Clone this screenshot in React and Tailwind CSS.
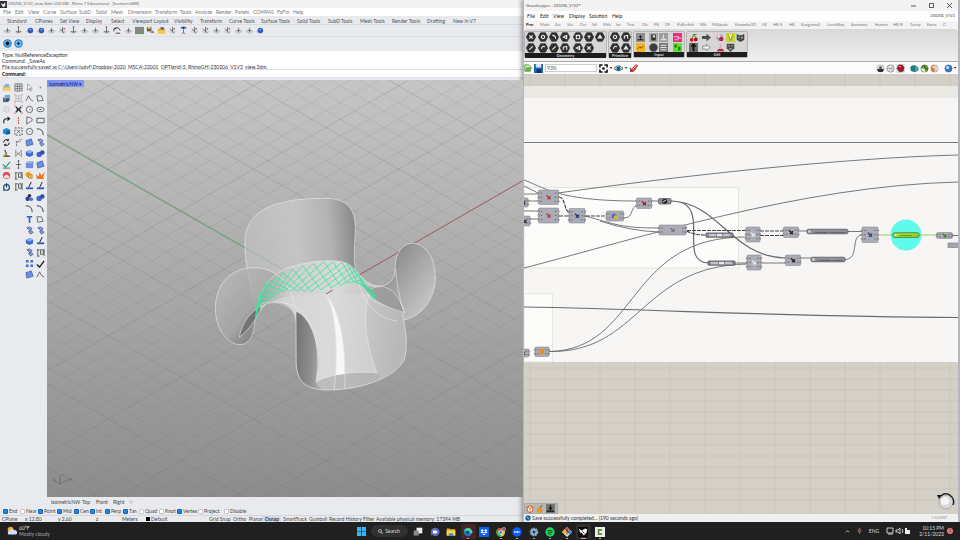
import React from "react";

const menuItems = [
  ["File", "w-[12px]"], ["Edit", "w-[13px]"], ["View", "w-[15px]"], ["Curve", "w-[17px]"],
  ["Surface", "w-[19px]"], ["SubD", "w-[17px]"], ["Solid", "w-[15px]"], ["Mesh", "w-[17px]"],
  ["Dimension", "w-[27px]"], ["Transform", "w-[25px]"], ["Tools", "w-[15px]"], ["Analyze", "w-[21px]"],
  ["Render", "w-[19px]"], ["Panels", "w-[18px]"], ["COMPAS", "w-[24px]"], ["FoFin", "w-[16px]"], ["Help", "w-[14px]"],
];

const toolTabs = [
  ["Standard", "w-[28px]"], ["CPlanes", "w-[25px]"], ["Set View", "w-[26px]"], ["Display", "w-[25px]"],
  ["Select", "w-[21px]"], ["Viewport Layout", "w-[42px]"], ["Visibility", "w-[26px]"], ["Transform", "w-[29px]"],
  ["Curve Tools", "w-[32px]"], ["Surface Tools", "w-[36px]"], ["Solid Tools", "w-[31px]"], ["SubD Tools", "w-[32px]"],
  ["Mesh Tools", "w-[32px]"], ["Render Tools", "w-[35px]"], ["Drafting", "w-[26px]"], ["New in V7", "w-[24px]"],
];

const snaps = [
  ["End", true, "w-[17px]"], ["Near", false, "w-[18px]"], ["Point", true, "w-[19px]"], ["Mid", true, "w-[17px]"],
  ["Cen", true, "w-[16px]"], ["Int", true, "w-[15px]"], ["Perp", true, "w-[18px]"], ["Tan", true, "w-[16px]"],
  ["Quad", false, "w-[20px]"], ["Knot", false, "w-[18px]"], ["Vertex", true, "w-[21px]"],
  ["Project", false, "w-[26px]"], ["Disable", false, "w-[24px]"],
];

const ghTabs = [
  ["Prm", "w-[14px]"], ["Math", "w-[15px]"], ["Set", "w-[12px]"], ["Vec", "w-[13px]"], ["Crv", "w-[12px]"],
  ["Srf", "w-[11px]"], ["Msh", "w-[13px]"], ["Int", "w-[11px]"], ["Trns", "w-[15px]"], ["Dis", "w-[12px]"],
  ["PK", "w-[11px]"], ["DF", "w-[12px]"], ["Pufferfish", "w-[23px]"], ["Wb", "w-[12px]"], ["Millipede", "w-[23px]"],
  ["Karamba3D", "w-[27px]"], ["LB", "w-[11px]"], ["HB-E", "w-[16px]"], ["HB", "w-[12px]"], ["Kangaroo2", "w-[26px]"],
  ["LunchBox", "w-[24px]"], ["Anemone", "w-[24px]"], ["Human", "w-[18px]"], ["HB-R", "w-[17px]"],
  ["Tunny", "w-[17px]"], ["Extra", "w-[16px]"], ["C", "w-[6px]"],
];

const K = "#3d4248";
const glyphs = {
  open: <><path d="M1 3h3l1 1h4v5H1z" fill="#e9b33b" /><path d="M3 1h5v4H3z" fill="#7fb2e6" /><path d="M1 9l1-4h8L9 9z" fill="#f5cf66" /></>,
  copy: <><path d="M1 4h6v5H1z" fill="#5b6c7c" /><path d="M3 1h6v6H3z" fill="#6fb0d8" /><path d="M4 5h4v3H4z" fill="#445" /></>,
  gear: <><circle cx="5" cy="5" r="3" fill="none" stroke="#d0d2d6" strokeWidth="1.4" /><circle cx="5" cy="5" r="1" fill="#d0d2d6" /></>,
  redo: <path d="M2 8V6q0-3 3-3h3M6 1l2.500 2L6 5" fill="none" stroke="#222" strokeWidth="1.2" />,
  solid: <><path d="M1 3l4-2 4 2v4L5 9 1 7z" fill="#1d8fd0" /><path d="M5 4h4v4H5z" fill="#0b5f9d" /></>,
  cycle: <path d="M2 5a3 3 0 0 1 5-2.500M8 5a3 3 0 0 1-5 2.500M7 1v2H5M3 9V7h2" fill="none" stroke="#222" strokeWidth="1.1" />,
  brush: <><path d="M3 1l2 5" stroke="#444" strokeWidth="1.3" /><path d="M2 6h4l3 3H1z" fill="#b39a3a" /><path d="M3 8h6" stroke="#333" /></>,
  check: <><path d="M1 5l3 3 5-6" fill="none" stroke="#2a9a7a" strokeWidth="1.3" /><path d="M1 9h8" stroke="#557" /></>,
  stop: <><circle cx="5" cy="5" r="4" fill="#e14545" /><path d="M2 6q3-4 6 0v2H2z" fill="#f7dada" /></>,
  power: <><circle cx="5" cy="6" r="3.200" fill="none" stroke="#1b4262" strokeWidth="1.3" /><path d="M5 1v5M1 9h2" stroke="#1b4262" strokeWidth="1.2" /></>,
  grid: <path d="M1 1h8v8H1zM1 3.700h8M1 6.300h8M3.700 1v8M6.300 1v8" fill="none" stroke="#6b6f76" strokeWidth="0.900" />,
  gridred: <><path d="M2 2h6v6H2zM2 5h6M5 2v6" fill="none" stroke="#b9bcc2" /><path d="M0 1h2M8 1h2M0 9h2M8 9h2" stroke="#e08080" /></>,
  cross: <><path d="M2 2l6 6M8 2L2 8M3 5h4" stroke="#333" strokeWidth="1.500" /><path d="M0 1h2M8 1h2M0 9h2M8 9h2" stroke="#e06060" /></>,
  dots: <path d="M5 1v8" stroke="#d55" strokeWidth="1.300" strokeDasharray="2 1" />,
  target: <><path d="M1 1h8v8H1z" fill="none" stroke="#444" strokeDasharray="2 1.500" /><path d="M3 3l4 4M7 3L3 7" stroke="#468" /></>,
  pts: <path d="M3 9V4h4M6 2l2 2M2 4h1M8 1v1" fill="none" stroke="#555" strokeDasharray="2 1" />,
  bars: <path d="M2 1v8M8 1v8M3 4l4 3M7 3L3 7" stroke="#666" fill="none" strokeWidth="0.800" />,
  plus: <path d="M5 0v10M2 5h6M4 1h2M4 9h2" stroke="#555" fill="none" strokeWidth="0.900" />,
  dims: <path d="M2 2v7M1 2h3M1 9h3M5 2h3v5H5zM9 1v8" stroke="#444" fill="none" strokeWidth="0.900" />,
  arrow: <path d="M3 1v7l2-2 1 3 1-.5-1-2.500h2z" fill="#fff" stroke="#777" strokeWidth="0.700" />,
  dot: <circle cx="5" cy="5" r="1" fill="#888" />,
  poly: <path d="M1 8l3-6 2 4 3 2" fill="none" stroke={K} strokeWidth="0.800" />,
  rectc: <path d="M1 2l5 0 2 5-6 1z" fill="none" stroke={K} strokeWidth="0.800" />,
  circ: <><circle cx="5" cy="5" r="3.500" fill="none" stroke={K} strokeWidth="0.800" /><path d="M5 5h1" stroke={K} /></>,
  ell: <><ellipse cx="5" cy="5" rx="4" ry="2.500" fill="none" stroke={K} strokeWidth="0.800" /><path d="M4 5h2" stroke={K} /></>,
  arc: <path d="M2 1q7 1 6 4L2 9z" fill="none" stroke={K} strokeWidth="0.800" />,
  rect: <path d="M1 2.500h8v5H1z" fill="none" stroke={K} strokeWidth="0.900" />,
  quarter: <path d="M1 2q7 0 7 7" fill="none" stroke={K} strokeWidth="1.100" />,
  srf: <path d="M1 3l6-2 2 6-7 2z" fill="#6b8fe0" stroke="#2d4ea0" strokeWidth="0.700" />,
  srf2: <path d="M2 2l3-1 3 2-3 2zM4 6l3-1 2 2-3 2z" fill="#8aa3d8" stroke="#2d3e80" strokeWidth="0.700" />,
  box: <><path d="M1 3l4-2 4 2v4L5 9 1 7z" fill="#4369cf" /><path d="M1 3l4 2 4-2-4-2z" fill="#92b0f2" /></>,
  balls: <><circle cx="3.500" cy="6" r="3" fill="#3e66cc" /><circle cx="7" cy="4" r="2.500" fill="#2f4fa5" /></>,
  cyl: <><path d="M1 4h8v5H1z" fill="#6d90e3" /><path d="M1 4l2-2h6v2z" fill="#b7cbf7" stroke="#2d4ea0" strokeWidth="0.500" /></>,
  puzzle: <><circle cx="3.500" cy="4" r="3" fill="#f2a128" /><path d="M4 4h4v4H4z" fill="#fbb944" stroke="#a25f11" strokeWidth="0.600" /></>,
  spark: <path d="M1 9L0 4l3 2 1-5 2 4 4-4-2 6 1 2z" fill="#f0761d" />,
  trim: <><path d="M7 0L4 6" stroke="#222" strokeWidth="1.100" /><path d="M1 7h8" stroke="#2d57c0" strokeWidth="2" /></>,
  three: <><circle cx="3" cy="6.500" r="2.500" fill="#2a4490" /><circle cx="7" cy="7" r="2" fill="#486fdd" /><circle cx="5" cy="3" r="2" fill="#30333a" /></>,
  text: <path d="M2 2h6M5 2v7" stroke="#3561c8" strokeWidth="1.800" />,
  blocks: <path d="M1 1h3v3H1zM6 1h3v3H6zM1 6h3v3H1zM6 6h3v3H6z" fill="#4a70d0" />,
  pale: <><path d="M0 6l5-3 5 3-5 3z" fill="#c7cad0" /><path d="M3 5h4M5 2v5" stroke="#686c74" strokeWidth="0.900" /></>,
  paleRed: <><path d="M0 6l5-3 5 3-5 3z" fill="#cfd2d8" /><path d="M2 3l5 5M5 1v5" stroke="#5d6168" strokeWidth="0.900" /><circle cx="7" cy="3" r="1" fill="#c66" /></>,
  ball: <><path d="M0 6l5-3 5 3-5 3z" fill="#cfd2d8" /><circle cx="6" cy="5" r="3" fill="#2e55b8" /><circle cx="6" cy="4" r="1" fill="#a3bdf5" /></>,
  axis: <><path d="M0 7l5-2 5 2-5 2z" fill="#cfd2d8" /><path d="M5 1v6M5 7l-3-1M5 7l3-1M4 1h2" stroke="#555" strokeWidth="0.900" fill="none" /></>,
  undo: <path d="M1 3l3 0M1 3v3M1 3q5-3 7 2M3 8h5" stroke="#333" strokeWidth="1" fill="none" />,
  cplane: <><path d="M0 1h10v8H0z" fill="#858985" /><path d="M0 8h9M1 9V1" stroke="#5a9a5a" strokeWidth="0.800" /></>,
  save: <><path d="M1 1h5v5H1z" fill="#6b5d38" /><path d="M2 1h3v2H2z" fill="#e6d9a0" /><path d="M4 7l4-2 1 3z" fill="#777" /></>,
  folder: <><path d="M1 3h3l1 1h4v5H1z" fill="#e7a92d" /><path d="M4 1l4 1v2H4z" fill="#555" /><path d="M1 9l1-4h8L9 9z" fill="#f7cd58" /></>,
  person: <><path d="M1 2q4-3 8 0-4 3-8 0" fill="#5a7abb" /><circle cx="5" cy="2" r="1" fill="#222" /><path d="M5 4v4M3 9l2-2 2 2" stroke="#666" fill="none" /></>,
  tick: <path d="M1 6l3 3 5-7" stroke="#222" strokeWidth="1.500" fill="none" />,
};

function Glyph({ name, className = "size-[9px]" }) {
  return <svg viewBox="0 0 10 10" className={`shrink-0 ${className}`} aria-hidden="true">{glyphs[name]}</svg>;
}

function ToolButton({ name, className = "h-[11px] w-[12px]" }) {
  return (
    <button type="button" aria-label={name} className={`flex shrink-0 items-center justify-center ${className}`}>
      <Glyph name={name} />
    </button>
  );
}

const planeTools = ["pale", "axis", "ball", "ball", "pale", "paleRed", "axis", "pale", "pale", "axis", "undo", "pale", "cplane", "save", "folder", "paleRed", "person", "paleRed", "paleRed", "pale", "paleRed", "pale", "pale"];
const column1 = ["open", "copy", "gear", "redo", "solid", "cycle", "brush", "check", "stop", "power"];
const column2 = ["grid", "gridred", "cross", "dots", "target", "pts", "bars", "plus", "dims", "dims"];
const column3 = ["arrow", "poly", "circ", "arc", "circ", "srf", "box", "cyl", "puzzle", "trim", "three", "quarter", "text", "srf2", "box", "srf2", "blocks", "srf"];
const column4 = ["dot", "rectc", "ell", "rect", "quarter", "srf2", "balls", "srf", "spark", "trim", "balls", "quarter", "rectc", "srf2", "trim", "dims", "tick", "poly"];

function sample(points, t) {
  const f = Math.min(t, 0.9999) * (points.length - 1);
  const i = Math.floor(f);
  const r = f - i;
  return [points[i][0] + (points[i + 1][0] - points[i][0]) * r, points[i][1] + (points[i + 1][1] - points[i][1]) * r];
}
const bandTop = [[170, 385], [176, 345], [200, 305], [238, 282], [305, 257], [375, 244], [435, 248], [462, 265], [482, 294], [530, 350]];
const bandLow = [[167, 418], [170, 385], [205, 360], [245, 335], [290, 333], [335, 335], [405, 322], [455, 304], [478, 303], [523, 358]];

function GridShell() {
  const n = 20;
  const span = 3;
  const lines = [];
  const mix = (p, q, k) => [p[0] + (q[0] - p[0]) * k, p[1] + (q[1] - p[1]) * k];
  for (let i = 1 - span; i < n; i++) {
    const a = Math.max(0, i) / n;
    const b = Math.min(n, i + span) / n;
    const cut = i < 0 ? -i / span : 0;
    const cut2 = i + span > n ? (i + span - n) / span : 0;
    const T = sample(bandTop, a), B = sample(bandLow, b), T2 = sample(bandTop, b), B2 = sample(bandLow, a);
    lines.push([mix(T, B2, cut), mix(B, T2, cut2)]);
    lines.push([mix(B2, T, cut), mix(T2, B, cut2)]);
  }
  return <path d={lines.map(([p, q]) => `M${p[0]} ${p[1]}L${q[0]} ${q[1]}`).join("")} stroke="#33e59a" strokeOpacity="0.900" strokeWidth="2.600" fill="none" />;
}

function Viewport() {
  const minor = [];
  const major = [];
  for (let i = -40; i < 60; i++) {
    const target = i % 5 === 0 ? major : minor;
    const x = 326 + i * 29;
    target.push(`M${x - 700} ${294 - 402}L${x + 700} ${294 + 402}`);
    target.push(`M${x - 700} ${294 + 402}L${x + 700} ${294 - 402}`);
  }
  return (
    <svg viewBox="47 80 476 418" preserveAspectRatio="xMinYMin slice" className="absolute inset-0 size-full" role="img" aria-label="IsometricNW model view">
      <defs>
        <linearGradient id="sky" x1="0" y1="0" x2="0" y2="1"><stop offset="0" stopColor="#c5c5c5" /><stop offset="1" stopColor="#8c8c8c" /></linearGradient>
        <linearGradient id="back" x1="0" y1="0.300" x2="1" y2="0.200"><stop offset="0" stopColor="#bebebe" /><stop offset="0.450" stopColor="#c9c9c9" /><stop offset="0.750" stopColor="#b4b4b4" /><stop offset="1" stopColor="#7b7b7b" /></linearGradient>
        <linearGradient id="leftLobe" x1="0" y1="0.300" x2="0.700" y2="0.800"><stop offset="0" stopColor="#b8b8b8" /><stop offset="0.550" stopColor="#a6a6a6" /><stop offset="1" stopColor="#626262" /></linearGradient>
        <linearGradient id="rightLobe" x1="0" y1="0.300" x2="0.800" y2="0.900"><stop offset="0" stopColor="#6e6e6e" /><stop offset="0.450" stopColor="#989898" /><stop offset="1" stopColor="#c8c8c8" /></linearGradient>
        <linearGradient id="front" x1="0" y1="0" x2="1" y2="0.100"><stop offset="0" stopColor="#9a9a9a" /><stop offset="0.250" stopColor="#cfcfcf" /><stop offset="0.550" stopColor="#d9d9d9" /><stop offset="0.800" stopColor="#c4c4c4" /><stop offset="1" stopColor="#b8b8b8" /></linearGradient>
        <linearGradient id="leg" x1="0" y1="0" x2="1" y2="0.150"><stop offset="0" stopColor="#727272" /><stop offset="0.600" stopColor="#909090" /><stop offset="1" stopColor="#b8b8b8" /></linearGradient>
      </defs>
      <path d="M47 80H523V498H47z" fill="url(#sky)" />
      <path d={minor.join("")} stroke="#777" strokeOpacity="0.200" strokeWidth="0.800" />
      <path d={major.join("")} stroke="#707070" strokeOpacity="0.280" strokeWidth="0.900" />
      <path d="M47 135L326 294" stroke="#4f9a55" strokeWidth="0.800" />
      <path d="M326 294L523 180.500" stroke="#a04c4c" strokeWidth="0.800" />
      <g transform="translate(200 180) scale(0.33333)" stroke="#ececec" strokeOpacity="0.750" strokeWidth="2.300" strokeLinejoin="round">
        <path d="M170 400C158 340 132 260 135 180C140 90 225 55 370 55C448 54 467 90 466 155C464 200 458 240 470 282L400 320L240 330z" fill="url(#back)" fillOpacity="0.820" />
        <path d="M0 127L378 342" stroke="#7fae82" strokeOpacity="0.500" strokeWidth="2" />
        <path d="M288 400C270 310 230 262 160 263C85 265 45 320 46 388C48 450 85 494 120 494C160 492 166 440 165 400C190 360 240 355 288 400z" fill="url(#leftLobe)" fillOpacity="0.750" />
        <path d="M118 472C125 430 150 395 185 378C170 420 145 450 118 472z" fill="#747474" />
        <path d="M478 285C495 320 570 340 585 280C583 220 605 190 640 190C685 195 708 245 706 300C700 375 650 422 590 422C525 418 480 350 478 285z" fill="url(#rightLobe)" fillOpacity="0.850" />
        <path d="M168 400C172 340 200 290 260 265C330 240 400 238 435 248C475 262 480 310 535 320C580 320 600 360 608 400C620 460 625 510 612 540C585 595 480 630 380 630C310 628 292 600 290 550V440C285 390 265 366 215 366C190 366 175 380 168 400z" fill="url(#front)" stroke="none" />
        <path d="M168 415C172 340 200 290 260 265C330 240 400 238 435 248C475 262 480 310 535 320" fill="none" />
        <path d="M215 366C275 368 345 430 355 540Q356 575 348 605C400 578 470 574 530 578C500 490 485 420 508 340C380 350 280 330 215 366z" fill="#dcdcdc" fillOpacity="0.500" stroke="none" />
        <path d="M288 395C330 410 358 490 355 560L348 605C350 615 360 625 380 630C310 628 292 600 290 550z" fill="url(#leg)" stroke="none" />
        <path d="M348 605C400 578 470 574 530 578C570 600 480 630 380 630C362 626 350 615 348 605z" fill="#b0b0b0" fillOpacity="0.700" stroke="none" />
        <path d="M348 605C400 578 470 574 530 578C500 490 485 420 508 340Q520 318 545 318M348 605C356 560 358 490 330 430C305 380 270 366 215 366Q185 366 168 385M288 390V545C290 600 310 628 380 630C480 630 585 595 612 540C625 500 618 460 608 400M285 385C275 330 255 300 230 285" fill="none" />
        <path d="M480 300C500 340 530 310 560 323C590 335 598 360 613 398C560 385 500 350 480 300z" fill="#8f8f8f" fillOpacity="0.700" stroke="none" />
        <path d="M475 290C480 360 530 418 590 422M510 328C555 305 593 330 613 398C560 380 520 370 500 340M587 265Q590 330 613 398" fill="none" />
        <path d="M378 342C410 400 412 500 408 585L434 582C434 480 420 400 378 342z" fill="#f7f7f7" stroke="none" />
        <path d="M378 342C410 400 415 530 402 630M378 342C428 410 438 520 434 627" fill="none" />
        <GridShell />
        <path d="M378 342L398 330" stroke="#6a3d3d" strokeWidth="3" />
      </g>
      <path d="M60 484V475M60 484L53 480M60 484L70 479" stroke="#666" strokeWidth="0.700" fill="none" />
      <g fill="#5a5a5a" fontFamily="Lato, sans-serif" fontSize="4"><text x="62" y="476">z</text><text x="53" y="480">y</text><text x="70" y="480">x</text></g>
    </svg>
  );
}

function Rhino() {
  return (
    <section className="flex min-h-0 min-w-0 flex-col overflow-hidden bg-[#e9eaee]">
      <header className="flex h-[8px] shrink-0 items-center gap-px bg-[#f2f2f2] text-[#555]">
        <svg viewBox="0 0 10 10" className="size-[7px]"><path d="M0 0h10v10H0z" fill="#2b3136" /><path d="M1 3l3 2 3-3 1 4-3 3-2-2z" fill="#fff" /></svg>
        <h1 className="whitespace-pre font-['Open_Sans'] text-[4px]">230206_V1V2_view.3dm (220 KB) - Rhino 7 Educational - [IsometricNW]</h1>
      </header>
      <nav className="flex h-[8px] shrink-0 items-center bg-white pl-[3px] text-[#777]">
        {menuItems.map(([t, w]) => <button type="button" key={t} className={`shrink-0 text-left ${w}`}>{t}</button>)}
      </nav>
      <nav className="flex h-[9px] shrink-0 items-center border-b border-[#d9dbe0] pt-px pl-[7px] text-[#4c4f55]">
        {toolTabs.map(([t, w]) => <button type="button" key={t} className={`shrink-0 whitespace-nowrap text-left ${w}`}>{t}</button>)}
      </nav>
      <div className="flex h-[12px] shrink-0 items-center border-b border-[#dddfe4] pl-[2px]">
        {planeTools.map((n, i) => <ToolButton key={i} name={n} className="h-[11px] w-[11px]" />)}
        <Glyph name="ball" />
      </div>
      <div className="flex h-[14px] shrink-0 items-center gap-[2px] pb-px pl-[3px]">
        {["Compas", "Session"].map((t) => (
          <button type="button" key={t} aria-label={t}>
            <svg viewBox="0 0 10 10" className="size-[9px]"><circle cx="5" cy="5" r="4.700" fill="#2287d6" /><circle cx="5" cy="5" r="2.800" fill={t === "Session" ? "#2f8fdd" : "#0a1824"} stroke="#b8e4fa" strokeWidth="0.900" /><circle cx="5" cy="5" r="1.200" fill="#0a1824" /></svg>
          </button>
        ))}
      </div>
      <div className="h-[18px] shrink-0 bg-white pt-px pl-[2px] leading-[6px] text-[#333]">
        <p>Type: NullReferenceException</p>
        <p>Command: _SaveAs</p>
        <p className="whitespace-nowrap">File successfully saved as C:\Users\judyf\Dropbox\2020_MSCA\22001_OPTIgrid\5. RhinoGH\230206_V1V2_view.3dm.</p>
      </div>
      <div className="mb-[2px] flex h-[9px] shrink-0 items-center border-y border-[#dfe1ea] bg-white pl-[2px]">
        <label htmlFor="command" className="font-bold text-black">Command:</label>
        <input id="command" className="h-[6px] min-w-0 flex-1 outline-none" />
      </div>
      <div className="flex min-h-0 flex-1">
        <aside className="flex w-[47px] shrink-0 pt-[2px]">
          {[column1, column2].map((c, i) => (
            <div key={i} className="flex w-[12px] flex-col">{c.map((n, j) => <ToolButton key={j} name={n} />)}</div>
          ))}
          <div className="flex w-[11px] flex-col">{column3.map((n, j) => <ToolButton key={j} name={n} className="h-[11px] w-[11px]" />)}</div>
          <div className="flex w-[11px] flex-col">{column4.map((n, j) => <ToolButton key={j} name={n} className="h-[11px] w-[11px]" />)}</div>
        </aside>
        <div className="relative min-w-0 flex-1">
          <Viewport />
          <button type="button" className="absolute top-0 left-0 flex h-[7px] w-[37px] items-center justify-between bg-[#8094f2] px-[2px] text-[#15205c]">
            IsometricNW<span>▾</span>
          </button>
        </div>
      </div>
      <nav className="flex h-[9px] shrink-0 items-center pl-[51px] text-[#444]">
        <button type="button" className="w-[31px] text-left">IsometricNW</button>
        <button type="button" className="w-[14px] text-left">Top</button>
        <button type="button" className="w-[17px] text-left">Front</button>
        <button type="button" className="w-[16px] text-left">Right</button>
        <svg viewBox="0 0 6 6" className="size-[4px]"><circle cx="3" cy="3" r="2" fill="none" stroke="#bbb" /></svg>
      </nav>
      <form className="flex h-[9px] shrink-0 items-center pt-px pl-[3px] text-[#444]">
        {snaps.map(([t, on, w]) => (
          <label key={t} className={`flex shrink-0 items-center gap-px ${w}`}>
            <input type="checkbox" defaultChecked={on} className="size-[5px] shrink-0 appearance-none rounded-[1px] border border-[#c4c6ca] bg-white checked:border-[#0a63b8] checked:bg-[#2b86d8]" />
            {t}
          </label>
        ))}
      </form>
      <footer className="flex h-[7px] shrink-0 items-center border-t border-[#d6d8dd] text-[#444]">
        <span className="w-[25px] pl-[2px]">CPlane</span><span className="w-[33px]">x 12.80</span><span className="w-[38px]">y 2.60</span><span className="w-[26px]">z</span>
        <span className="w-[24px]">Meters</span><span className="size-[4px] bg-black" /><span className="w-[59px] pl-px">Default</span>
        <button type="button" className="w-[24px] whitespace-nowrap text-left">Grid Snap</button>
        <button type="button" className="w-[16px] text-left">Ortho</button>
        <button type="button" className="w-[14px] text-left">Planar</button>
        <button type="button" className="w-[18px] bg-[#ccd6ee] font-bold">Osnap</button>
        <button type="button" className="w-[28px] pl-[2px] text-left">SmartTrack</button>
        <button type="button" className="w-[20px] text-left">Gumball</button>
        <button type="button" className="w-[34px] whitespace-nowrap text-left">Record History</button>
        <button type="button" className="w-[13px] text-left">Filter</button>
        <span className="whitespace-nowrap">Available physical memory: 17394 MB</span>
      </footer>
    </section>
  );
}

const hexMarks = ["M4 4l4 4M8 4L4 8", "M4 8l4-4", "M6 4a2 2 0 1 0 .1 0", "M4 4q4 0 4 4", "M4 6l4-2v4z", "M4 7q2-5 4-2", "M4 4h4v4H4z", "M4 8V5l4-1v4", "M4 5h4M6 4v4", "M4 7l2-3 2 3z"];
function Hex({ i }) {
  return (
    <svg viewBox="0 0 12 12" className="size-[10px]"><path d="M3.200 0.800h5.600L11.600 6 8.800 11.200H3.200L0.400 6z" fill="#303030" stroke="#111" strokeWidth="0.600" /><path d={hexMarks[i % 10]} fill="none" stroke="#f2f2f2" strokeWidth="1.300" /></svg>
  );
}
const tiles = {
  grey: <><path d="M0 0h12v12H0z" fill="#8d8d8d" /><path d="M2 9h8M6 3v6M4 5h4" stroke="#222" strokeWidth="1.300" /></>,
  yellow: <><path d="M0 0h12v12H0z" fill="#f0b323" /><path d="M2 8l3-3 2 2 3-3" stroke="#7a4a00" fill="none" strokeWidth="1.300" /></>,
  dial: <><path d="M0 0h12v12H0z" fill="#a8a8a8" /><path d="M3 2h6v8H3z" fill="#303030" /><path d="M5 3h3v3H5z" fill="#ddd" /></>,
  knob: <circle cx="6" cy="6" r="5.500" fill="#3c3c3c" stroke="#777" />,
  graph: <><path d="M0 0h12v12H0z" fill="#9d9d9d" /><path d="M2 9h8M6 2v5l-3 2M6 7l3 2" stroke="#eee" fill="none" strokeWidth="1.200" /></>,
  list: <><path d="M0 0h12v12H0z" fill="#777" /><path d="M2 3h8M2 6h8M2 9h8" stroke="#e5e5e5" strokeWidth="1.300" /></>,
  pink: <><path d="M0 0h12v12H0z" fill="#e52f83" /><path d="M1 5h6v2h4M2 9h5" stroke="#ffc4de" strokeWidth="1.500" fill="none" /></>,
  green: <><path d="M0 0h12v12H0z" fill="#61e32c" /><path d="M2 2h3v4H2zM7 5h3v5H7z" fill="#177a12" /></>,
  cherry: <><path d="M4 8L6 2l4 5M6 2h4" stroke="#4b8a2a" strokeWidth="1.300" fill="none" /><circle cx="3.500" cy="9" r="2.500" fill="#cf1c1c" /><circle cx="9" cy="8.500" r="2.500" fill="#a81414" /></>,
  tree: <><path d="M0 0h12v12H0z" fill="#6c6c6c" /><path d="M6 11V5M3 4h6M4 2h4" stroke="#161616" strokeWidth="2.500" /></>,
  right: <path d="M0 4h6V1l6 5-6 5V8H0z" fill="#4c4c4c" />,
  hollow: <path d="M1 4h5V2l5 4-5 4V8H1z" fill="#f4f4f4" stroke="#777" />,
  bloom: <><circle cx="5" cy="6" r="4.500" fill="#b8a0ab" /><circle cx="7" cy="8" r="3" fill="#b92062" /><circle cx="4" cy="4" r="2" fill="#e9e0e4" /></>,
  flask: <><path d="M5 1h2v4l4 6H1l4-6z" fill="#d8a9ba" /><path d="M3 8h6l2 3H1z" fill="#b7264f" /></>,
  lime: <><path d="M0 0h12v12H0z" fill="#c8d43a" /><path d="M3 2l3 8 3-8" fill="#f7f7b5" stroke="#777c20" /></>,
  mask: <><path d="M1 1h10v6l-5 5-5-5z" fill="#4a4a4a" /><path d="M3 4h2M7 4h2M4 8h4" stroke="#ddd" /></>,
  cat: <><path d="M1 1l3 2h4l3-2v8l-5 3-5-3z" fill="#3d4141" /><circle cx="4" cy="6" r="1.200" fill="#4fb4ff" /><circle cx="8" cy="6" r="1.200" fill="#e9c845" /><path d="M4 9h4" stroke="#d33" /></>,
};
function Tile({ name }) {
  return <svg viewBox="0 0 12 12" className="size-[9px]">{tiles[name]}</svg>;
}
function Panel({ title, className, children }) {
  return (
    <section className={`flex shrink-0 flex-col rounded-[2px] border border-[#b5b5b5] bg-[#d6d6d6] ${className}`}>
      <div className="flex flex-1 items-center justify-around">{children}</div>
      <h3 className="flex h-[5px] items-center justify-center bg-[#1d1d1d] text-[4px] font-bold leading-[5px] text-[#ddd]">{title}</h3>
    </section>
  );
}
function Group({ cols, children }) {
  return <div className={`grid ${cols}`}>{children}</div>;
}

function Component({ x, y, w, h, mark = "#333" }) {
  const rows = h > 12 ? [0.22, 0.5, 0.78] : [0.3, 0.7];
  return (
    <g>
      <rect x={x} y={y} width={w} height={h} rx="1" fill="#acacb7" stroke="#8a8a92" strokeWidth="0.600" />
      {rows.map((r) => (
        <g key={r}>
          <circle cx={x} cy={y + h * r} r="0.800" fill="#eee" stroke="#444" strokeWidth="0.500" />
          <circle cx={x + w} cy={y + h * r} r="0.800" fill="#eee" stroke="#444" strokeWidth="0.500" />
          <path d={`M${x + 2.200} ${y + h * r}h1.500M${x + w - 3.700} ${y + h * r}h1.500`} stroke="#62626c" strokeWidth="0.900" />
        </g>
      ))}
      <path d={`M${x + w / 2 - 2} ${y + h / 2 - 2}l4 4m0-3l-3 3`} stroke={mark} strokeWidth="1.400" />
    </g>
  );
}
function Pill({ x, y, w, label, fill = "#8f8f9a" }) {
  return (
    <g>
      <rect x={x} y={y} width={w} height="4.600" rx="1.500" fill={fill} stroke="#4b4b52" strokeWidth="0.700" />
      <circle cx={x + 2.500} cy={y + 2.300} r="1.200" fill="#ddd" />
      <text x={x + w / 2 + 2} y={y + 3.300} fontSize="2.500" textAnchor="middle" fill="#222" fontFamily="Lato, sans-serif">{label}</text>
    </g>
  );
}
function Slider({ x, y }) {
  return (
    <g>
      <rect x={x} y={y} width="27" height="4.200" rx="0.800" fill="#8c8c98" stroke="#4a4a52" strokeWidth="0.800" />
      <rect x={x + 3} y={y + 0.900} width="7" height="2.400" fill="#c4c4cc" /><rect x={x + 11} y={y + 0.900} width="5" height="2.400" fill="#e8e8ea" /><rect x={x + 17} y={y + 0.900} width="7" height="2.400" fill="#c4c4cc" />
    </g>
  );
}

function Definition() {
  const xs = Array.from({ length: 13 }, (_, i) => 530 + i * 35);
  const ys = Array.from({ length: 13 }, (_, i) => 368 + i * 11);
  return (
    <svg viewBox="524 74 434 440" preserveAspectRatio="xMinYMin slice" className="absolute inset-0 size-full" role="img" aria-label="Grasshopper definition">
      <path d="M524 74h434v440H524z" fill="#d4cfc7" />
      <path d={xs.map((x) => `M${x} 74v440`).join("") + ys.map((y) => `M524 ${y}h434`).join("")} stroke="#c8c3bb" strokeWidth="0.600" />
      <path d="M524 86h434v12H524z" fill="#ebe9e4" />
      <path d="M524 98h434v264H524z" fill="#f7f6f5" />
      <path d="M524 187.500h214.500V268H524z" fill="#fcfcfa" stroke="#dddcd8" strokeWidth="0.700" />
      <path d="M524 294h28.500v68H524z" fill="#fcfcfa" stroke="#dddcd8" strokeWidth="0.700" />
      <g fill="none" stroke="#6a6a6a" strokeWidth="0.900">
        <path d="M524 142.500H958" />
        <path d="M558 193C680 176 840 158 958 155" />
        <path d="M524 268C640 238 800 186 958 182" />
        <path d="M524 180C545 188 560 201 636 201M524 186Q530 189 538 193M524 194h14M528 201h10M524 211h14M530 219h8" />
        <path d="M585 216C615 224 620 228 659 228M600 221Q630 231 659 232" />
        <path d="M624 218C634 218 630 206 637 206M652 201h7" />
        <path d="M671 201C715 201 675 263 709 263M671 201C720 203 730 256 785 258" strokeWidth="1.200" />
        <path d="M549 351.500C640 350 625 236 747 237M549 351.500C640 353 640 266 747 264M735 263h13" />
        <path d="M762 263h24M801 258h10M845 259.500C860 259.500 850 235 862 235M799 231h8M848 231.500h14M952 235.500h6" />
        <path d="M524 307C660 309 780 317 958 317.500" strokeWidth="1.200" />
      </g>
      <path d="M559 197C566 198 564 211 569 212M559 216h10M586 216h20M687 230.500h60M760 231h24M760 235.500h24M687 231q6 4 19 4" fill="none" stroke="#444" strokeWidth="1.200" strokeDasharray="4 1" />
      <circle cx="906" cy="235" r="15.500" fill="#5ffaea" />
      <path d="M879 235H937" stroke="#83c957" strokeWidth="0.900" />
      <Component x={518} y={198} w={10} h={9} /><Component x={519} y={216} w={11} h={10} />
      <Component x={538.5} y={190} w={20} h={14.5} mark="#b53a3a" /><Component x={538.5} y={208} w={20} h={15} mark="#b53a3a" />
      <Component x={569} y={208.5} w={16} h={14.5} mark="#25346f" />
      <Component x={606.5} y={211} w={17} h={10} mark="#e0a12a" />
      <circle cx="614" cy="216" r="2.500" fill="#456fc0" /><circle cx="615.500" cy="217" r="1.800" fill="#f0b323" />
      <Component x={636.5} y={198} w={15} h={10.5} mark="#9a2020" />
      <rect x="658.500" y="198.500" width="12.500" height="5.500" rx="1.200" fill="#8f8f99" stroke="#555" strokeWidth="0.700" /><circle cx="664.700" cy="201.200" r="2.500" fill="#202020" /><path d="M663 202l3-2" stroke="#fff" strokeWidth="0.900" />
      <Component x={659} y={225} w={27} h={10} mark="#777780" />
      <Slider x={706} y={233} /><Slider x={708} y={261} />
      <Component x={746} y={227} w={14} h={15} mark="#dfeee2" /><Component x={747} y={255} w={14} h={15} mark="#dfeee2" />
      <Component x={783.5} y={227} w={15} h={10.5} mark="#222" /><Component x={785.5} y={255} w={15} h={10.5} mark="#222" />
      <Pill x={807} y={229.2} w={41} label="Asymptotics 1.0 from middle" /><Pill x={811} y={257.2} w={34} label="Asymptotics 1.0 smaller" />
      <Component x={862} y={227} w={16} h={15.5} mark="#26408f" />
      <Pill x={893} y={232.8} w={26} label="Asymptotics +/-0" fill="#9be51c" />
      <Component x={937} y={232.5} w={15} h={6} mark="#3f8036" />
      <rect x="948" y="243" width="12" height="4.500" fill="#a5a5ae" stroke="#777" strokeWidth="0.600" />
      <Component x={516} y={349} w={13} h={8} /><Component x={535} y={347} w={14} h={9.5} mark="#e0781b" />
      <path d="M540 349h4v5h-4z" fill="#ed8a1d" />
    </svg>
  );
}

const spheres = [
  ["No preview", <><circle cx="5" cy="5" r="4" fill="#e6e6e6" stroke="#888" strokeWidth="0.500" /><path d="M1 6q4-2 8 0-1 3-4 3T1 6" fill="#2e2e2e" /><circle cx="5" cy="4" r="1.500" fill="#555" /></>],
  ["Wireframe", <><circle cx="5" cy="5" r="4" fill="#f3f3f3" stroke="#666" strokeWidth="0.700" /><path d="M2 3l6 5M3 8l5-6M1 5h8" stroke="#888" strokeWidth="0.600" /></>],
  ["Shaded", <><path d="M1 5l2-4h4l2 3-1 4-4 1z" fill="#b81616" stroke="#5a0a0a" strokeWidth="0.500" /><path d="M3 3l2-1 1 1-2 1z" fill="#f09a9a" /></>],
  null,
  ["Selected only", <><circle cx="4" cy="5" r="3.600" fill="#167e86" /><path d="M5 2l4 2v3L5 9z" fill="#4aa7ac" stroke="#0b4b52" strokeWidth="0.500" /></>],
  ["Document", <><circle cx="5" cy="5" r="4" fill="#5ea52f" stroke="#33581b" strokeWidth="0.500" /><path d="M1 5l4 0 1 4Q2 9 1 5" fill="#eee" /><path d="M4 1l2 4 3 1" stroke="#222" strokeWidth="0.700" fill="none" /></>],
  ["Mesh quality", <><circle cx="5" cy="5" r="4" fill="#dd7d1f" stroke="#77706a" strokeWidth="0.500" /><path d="M5 1q4 1 4 4T5 9z" fill="#d9d9d9" /><path d="M2 4q1-2 3-2v3z" fill="#fbe3c6" /></>],
  null,
  ["Preview settings", <><circle cx="5" cy="5" r="4" fill="#3378c4" stroke="#224b7d" strokeWidth="0.500" /><circle cx="4" cy="4" r="1.800" fill="#b2dcfb" /></>],
];

function Grasshopper() {
  return (
    <section className="flex min-h-0 min-w-0 flex-col border-r-[2px] border-l border-[#b4b7bd] bg-[#f0f0f0] shadow-[-2px_0_4px_rgba(0,0,0,0.35)]">
      <header className="flex h-[11px] shrink-0 items-center justify-between bg-[#f3f3f3] pr-[6px] pl-[2px] text-[#333]">
        <h2 className="font-['Open_Sans'] text-[4px]">Grasshopper - 230206_V1V2*</h2>
        <div className="flex gap-[13px]">
          {[["Minimise", "M0 3h5"], ["Maximise", "M.5.5h4v4h-4z"], ["Close", "M0 0l5 5M5 0L0 5"]].map(([l, d]) => (
            <button type="button" key={l} aria-label={l}><svg viewBox="0 0 5 5" className="size-[5px]"><path d={d} fill="none" stroke="#333" strokeWidth="0.800" /></svg></button>
          ))}
        </div>
      </header>
      <nav className="flex h-[10px] shrink-0 items-center bg-white pr-[3px] pl-[3px] text-[#222]">
        {[["File", "w-[13px]"], ["Edit", "w-[13px]"], ["View", "w-[16px]"], ["Display", "w-[20px]"], ["Solution", "w-[23px]"], ["Help", "w-[12px]"]].map(([t, w]) => (
          <button type="button" key={t} className={`text-left ${w}`}>{t}</button>
        ))}
        <span className="ml-auto font-['Open_Sans'] text-[4px]">230206_V1V2</span>
      </nav>
      <nav className="flex h-[8px] shrink-0 items-center overflow-hidden bg-[#f3f3f3] pl-[2px] text-[4px] text-[#777]">
        {ghTabs.map(([t, w], i) => <button type="button" key={t} className={`shrink-0 text-left ${w} ${i === 0 ? "font-bold text-[#222]" : ""}`}>{t}</button>)}
      </nav>
      <div className="flex h-[33px] shrink-0 items-start gap-px rounded-t-[3px] border-b border-[#aaa] bg-linear-to-b from-[#d8d8d8] to-[#efefef] pt-[2px]">
        <Panel title="Geometry" className="h-[27px] w-[83px]">
          <Group cols="grid-cols-1 gap-px">{[0, 1].map((i) => <Hex key={i} i={i} />)}</Group>
          <Group cols="grid-cols-3 gap-px">{[2, 3, 4, 5, 1, 7].map((i) => <Hex key={i} i={i} />)}</Group>
          <Group cols="grid-cols-3 gap-px">{[6, 8, 9, 4, 0].map((i) => <Hex key={i} i={i} />)}</Group>
        </Panel>
        <Panel title="Primitive" className="h-[27px] w-[24px]">
          <Group cols="grid-cols-2 gap-px">{[2, 7, 5, 9].map((i) => <Hex key={i} i={i} />)}</Group>
        </Panel>
        <Panel title="Input" className="h-[27px] w-[52px]">
          <Group cols="grid-cols-1 gap-px">{["grey", "yellow"].map((n) => <Tile key={n} name={n} />)}</Group>
          <Group cols="grid-cols-2 gap-px">{["dial", "graph", "knob", "list"].map((n) => <Tile key={n} name={n} />)}</Group>
          <Group cols="grid-cols-1 gap-px">{["pink", "green"].map((n) => <Tile key={n} name={n} />)}</Group>
        </Panel>
        <Panel title="Util" className="h-[27px] w-[62px]">
          <Group cols="grid-cols-1 gap-px">{["cherry", "tree"].map((n) => <Tile key={n} name={n} />)}</Group>
          <Group cols="grid-cols-1 gap-px">{["right", "hollow"].map((n) => <Tile key={n} name={n} />)}</Group>
          <Group cols="grid-cols-3 gap-px">{["bloom", "lime", "cat", "flask", "mask"].map((n) => <Tile key={n} name={n} />)}</Group>
        </Panel>
      </div>
      <div className="flex h-[12px] shrink-0 items-center gap-[2px] bg-[#fbfbfb] pr-px">
        <button type="button" aria-label="Open"><svg viewBox="0 0 10 10" className="size-[8px]"><path d="M1 1h5l2 2v6H1z" fill="#d8eec8" stroke="#4b8d3a" /><path d="M1 9l2-5h7L8 9z" fill="#63b248" /></svg></button>
        <button type="button" aria-label="Save"><svg viewBox="0 0 10 10" className="size-[9px]"><path d="M0 0h10v10H0z" fill="#2261b5" /><path d="M2 0h6v4H2z" fill="#d8e8fa" /><path d="M3 6h5v4H3z" fill="#12305e" /></svg></button>
        <select aria-label="Zoom" defaultValue="93%" className="h-[8px] w-[52px] appearance-none border border-[#ccc] bg-white pl-px leading-[6px] text-[#555]"><option>93%</option></select>
        <button type="button" aria-label="Zoom extents"><svg viewBox="0 0 10 10" className="size-[9px]"><path d="M1 4V1h3M6 1h3v3M9 6v3H6M4 9H1V6" fill="none" stroke="#111" strokeWidth="1.700" /><circle cx="5" cy="5" r="1.500" fill="#111" /></svg></button>
        <span className="w-[2px] text-[4px]">▾</span>
        <button type="button" aria-label="Preview"><svg viewBox="0 0 10 10" className="size-[9px]"><path d="M0 5q5-6 10 0-5 5-10 0" fill="#cfe2ee" stroke="#37566b" /><circle cx="5" cy="5" r="2.300" fill="#1d5b88" /></svg></button>
        <span className="w-[2px] text-[4px]">▾</span>
        <button type="button" aria-label="Sketch"><svg viewBox="0 0 10 10" className="size-[9px]"><path d="M1 9q0-3 2-4L8 0l2 2-4 6q-2 1-5 1" fill="#d2463b" /><path d="M4 6l4-4" stroke="#f6c9c4" /><path d="M1 4q1 3 3 5" stroke="#333" fill="none" /></svg></button>
        <div className="ml-auto flex items-center gap-px">
          {spheres.map((s, i) => s ? (
            <button type="button" key={i} aria-label={s[0]} className={i === 2 ? "bg-[#cfe6f8]" : ""}>
              <svg viewBox="0 0 10 10" className="size-[9px]">{s[1]}</svg>
            </button>
          ) : <span key={i} className="w-[3px]" />)}
          <span className="w-[3px] text-[4px]">▾</span>
        </div>
      </div>
      <div className="relative min-h-0 flex-1">
        <Definition />
        <div className="absolute bottom-0 left-0 flex h-[11px] w-[34px] items-center gap-[2px] border border-[#aaa] bg-[#b9b7b3] pl-px">
          <svg viewBox="0 0 10 10" className="size-[8px]"><path d="M1 3l4-2 4 2-1 5-3 1.500L2 8z" fill="#fff" stroke="#d8521d" strokeWidth="1.200" /><path d="M1 3l4 1 4-1M5 4v5" stroke="#d8521d" fill="none" /></svg>
          <svg viewBox="0 0 10 10" className="size-[8px]"><circle cx="4.500" cy="6.500" r="3.300" fill="#f2941f" /><path d="M5 4l3-4" stroke="#b55" strokeWidth="1.500" /></svg>
          <svg viewBox="0 0 10 10" className="size-[9px]"><path d="M0 0h10v10H0z" fill="#777" /><path d="M5 1v5M3 4l2 2 2-2M1 8h8" stroke="#111" strokeWidth="1.300" fill="none" /></svg>
        </div>
        <svg viewBox="0 0 20 20" className="absolute right-[2px] bottom-[3px] size-[20px]" aria-hidden="true"><circle cx="10" cy="11" r="7" fill="#d8d8d8" stroke="#888" strokeWidth="0.600" /><circle cx="9" cy="10" r="4" fill="#f5f5f5" /><path d="M5 5Q10 0 16 6Q19 10 17 14" fill="none" stroke="#111" strokeWidth="1.200" /><path d="M1 4l5 0-3 4z" fill="#111" /></svg>
      </div>
      <footer className="flex h-[8px] shrink-0 items-center gap-px bg-[#f0f0f0] pr-[11px] pl-px text-[#333]">
        <svg viewBox="0 0 10 10" className="size-[6px]"><circle cx="5" cy="5" r="4.500" fill="#1966a8" /><path d="M3 3l4 4" stroke="#9fd2f5" strokeWidth="1.500" /></svg>
        Save successfully completed... (190 seconds ago)
        <span className="ml-auto font-['Open_Sans'] text-[4px] text-[#777]">1.0.0007</span>
      </footer>
    </section>
  );
}

const apps = [
  ["Task view", <><path d="M5 1h8v8H5z" fill="#f0f0f0" /><path d="M1 5h7v7H1z" fill="#8c8c8c" /></>],
  ["Chat", <><path d="M7 1a6 6 0 1 1-4 10l-2 1 .5-3A6 6 0 0 1 7 1" fill="#6165c4" /><path d="M4 5h4v4H4zM8 6l2-1v4L8 8z" fill="#fff" /></>],
  ["Files", <><path d="M1 2h4l1 1h7v9H1z" fill="#e7a81c" /><path d="M1 5h12v7H1z" fill="#fbd25a" /><path d="M4 9h6v3H4z" fill="#2883ce" /></>],
  ["Edge", <><circle cx="7" cy="7" r="6" fill="#1877c7" /><path d="M1 6q3-6 9-4 4 3 3 6-3 2-5 0 1-3-2-3-3 0-5 1" fill="#4dd29b" /><circle cx="7" cy="7.500" r="2" fill="#0d3d71" /></>],
  ["Dropbox", <><path d="M0 0h14v14H0z" fill="#0b61f4" /><path d="M4.500 3L7 4.500 4.500 6 2 4.500zM9.500 3L12 4.500 9.500 6 7 4.500zM4.500 6L7 7.500 4.500 9 2 7.500zM9.500 6L12 7.500 9.500 9 7 7.500zM7 9l2 1.200L7 11.500 5 10.200z" fill="#fff" /></>],
  ["Chrome", <><circle cx="6.500" cy="7.500" r="6" fill="#f3c524" /><path d="M6.500 7.500L1.500 4a6 6 0 0 1 10 0z" fill="#df4333" /><path d="M6.500 7.500L1.500 4A6 6 0 0 0 6.500 13.500z" fill="#30a452" /><circle cx="6.500" cy="7.500" r="2.700" fill="#3f80e8" stroke="#fff" /><circle cx="11" cy="3" r="2.500" fill="#6d6a66" stroke="#ddd" strokeWidth="0.600" /></>],
  ["Zoom", <><circle cx="7" cy="7" r="6.500" fill="#0b5cff" /><path d="M3 7h8" stroke="#fff" strokeWidth="2" strokeDasharray="1.500 .5" /></>],
  ["Settings", <><circle cx="7" cy="7" r="4.800" fill="#6db0df" stroke="#9aa3ab" strokeWidth="2.500" strokeDasharray="2.500 1" /><circle cx="7" cy="7" r="1.800" fill="#18324a" /></>],
  ["Spotify", <><circle cx="7" cy="7" r="6.500" fill="#1ed760" /><path d="M3 5q4-1 8 1M4 7.500q3-1 6 .5M4 10q3-1 5 .5" stroke="#111" fill="none" /></>],
  ["Git", <><path d="M7 0l7 7-7 7-7-7z" fill="#e8e5dc" /><path d="M7 0l3.500 3.500L7 7 3.500 3.500z" fill="#e04b3e" /><path d="M10.500 3.500L14 7l-3.500 3.500L7 7z" fill="#4a8de0" /><path d="M0 7l3.500-3.500L7 7l-3.500 3.500z" fill="#e9b83a" /><path d="M7 3v8M7 5l3 3" stroke="#222" /></>],
  ["Rhino", <><path d="M0 0h14v14H0z" fill="#050505" /><path d="M1 2l4 3 5-3 3 1-1 5-4 4-3-4H3z" fill="#f5f5f5" /><path d="M6 6l3 3" stroke="#050505" /></>],
  ["Camtasia", <><path d="M0 0h14v14H0z" fill="#eee" /><path d="M10 4H5v6h5" stroke="#5c8b2e" strokeWidth="2.300" fill="none" /></>],
];

function Taskbar() {
  return (
    <footer className="grid h-[18px] shrink-0 grid-cols-[1fr_auto_1fr] items-center bg-[#202020] text-[#ddd]">
      <button type="button" className="flex items-center gap-[2px] pl-[7px] text-left leading-[6px]">
        <svg viewBox="0 0 14 14" className="size-[10px]"><circle cx="5" cy="5" r="4" fill="#f2a72c" /><path d="M2 12a3 3 0 0 1 1-5 4 4 0 0 1 7-1 3 3 0 0 1 2 6z" fill="#cbdffa" /></svg>
        <span>60°F<br /><span className="text-[#aaa]">Mostly cloudy</span></span>
      </button>
      <div className="flex items-center pl-[5px]">
        <button type="button" aria-label="Start" className="mr-[5px]"><svg viewBox="0 0 14 14" className="size-[9px]"><path d="M0 0h6.500v6.500H0zM7.500 0H14v6.500H7.500zM0 7.500h6.500V14H0zM7.500 7.500H14V14H7.500z" fill="#35b8f2" /></svg></button>
        <button type="button" className="mr-[3px] flex h-[12px] w-[37px] items-center justify-center gap-[2px] rounded-full bg-[#303030]">
          <svg viewBox="0 0 10 10" className="size-[5px]"><circle cx="4" cy="4" r="3" fill="none" stroke="#eee" strokeWidth="1.300" /><path d="M6 6l4 4" stroke="#eee" strokeWidth="1.300" /></svg>Search
        </button>
        <div className="flex items-center">
          {apps.map(([l, art], i) => (
            <button type="button" key={l} aria-label={l} className={`flex h-[15px] w-[15px] flex-col items-center justify-end gap-px rounded-[2px] ${i === 3 ? "bg-[#492425]" : i === 10 ? "bg-[#2f2f2f]" : ""} ${i % 2 ? "mr-px" : "mr-[2px]"}`}>
              <svg viewBox="0 0 14 14" className="size-[10px]">{art}</svg>
              <span className={`h-px ${i === 10 ? "w-[5px] bg-[#f28b82]" : i === 3 ? "w-[2px] bg-[#f28b82]" : i > 4 ? "w-[2px] bg-[#aaa]" : "w-[2px] bg-transparent"}`} />
            </button>
          ))}
        </div>
      </div>
      <div className="flex items-center justify-end gap-[5px] pr-[7px]">
        <svg viewBox="0 0 6 6" className="size-[5px]"><path d="M1 4l2-2 2 2" fill="none" stroke="#ddd" /></svg>
        <svg viewBox="0 0 8 10" className="mx-[2px] h-[6px] w-[5px]"><path d="M3 1h2v4H3zM1 4q0 3 3 3t3-3M4 7v3" fill="none" stroke="#e0867f" /></svg>
        <span>ENG</span>
        <svg viewBox="0 0 26 8" className="mx-[2px] h-[8px] w-[26px]"><path d="M1 1h6v5H1zM2 7h5M10 3h2l2-2v6l-2-2h-2zM16 2q2 2 0 4" fill="none" stroke="#ddd" strokeWidth="0.900" /><path d="M19 3h5v4h-5zM19 1h2v3h-2z" fill="#eee" /></svg>
        <span className="text-right leading-[6px]">10:15 PM<br />2/11/2023</span>
        <span className="-ml-[2px] flex size-[6px] items-center justify-center rounded-full bg-[#e87878] text-[4px] text-[#401515]">3</span>
      </div>
    </footer>
  );
}

export default function App() {
  return (
    <div className="flex h-screen flex-col overflow-hidden font-[Lato,'Open_Sans',sans-serif] text-[5px] leading-[6px]">
      <main className="grid min-h-0 flex-1 grid-cols-[523fr_437fr] grid-rows-[minmax(0,1fr)]">
        <Rhino />
        <Grasshopper />
      </main>
      <Taskbar />
    </div>
  );
}
